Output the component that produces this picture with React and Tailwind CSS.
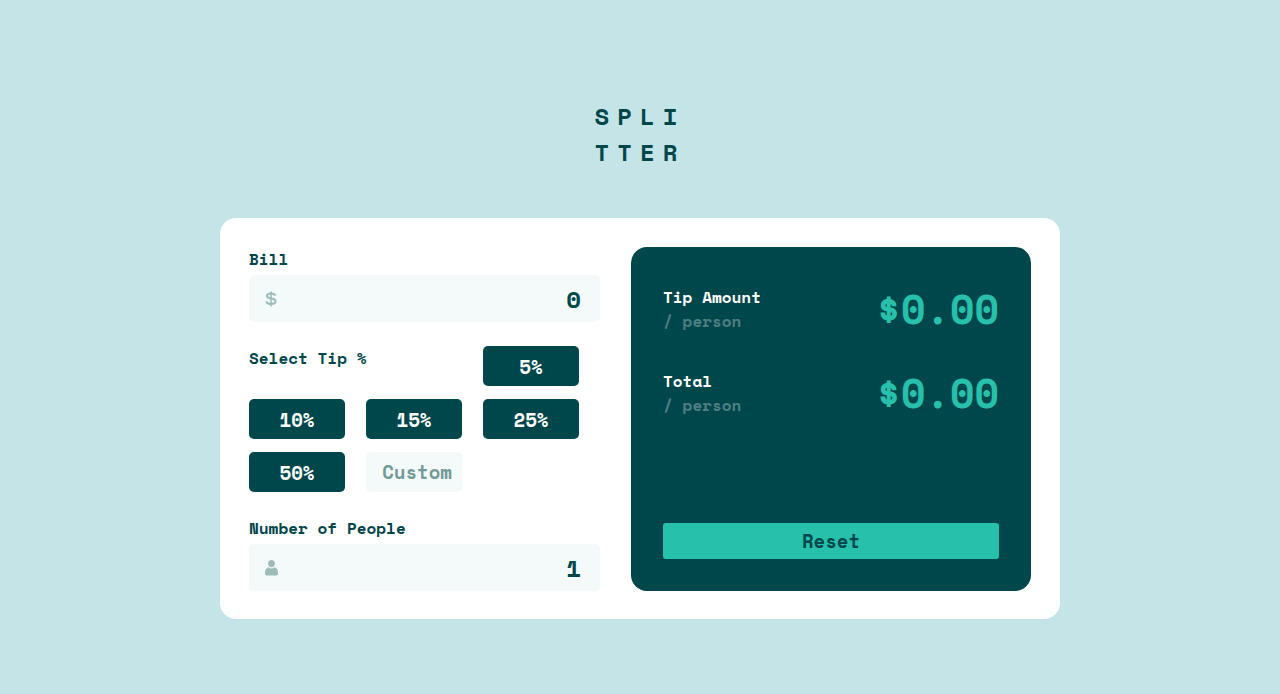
import { useState } from "react";

const TIPS = [5, 10, 15, 25, 50];

function DollarIcon() {
  return (
    <svg width="12" height="17" viewBox="0 0 12 17" fill="none" stroke="#9dbcb9" strokeWidth="2" aria-hidden="true">
      <path d="M10.500 5.600C9.800 4.200 8.200 3.500 6.100 3.500 3.700 3.500 1.900 4.400 1.900 6c0 1.600 1.600 2.100 4.200 2.500 2.700.4 4.500 1 4.500 2.800 0 1.700-1.900 2.700-4.500 2.700-2.400 0-4.300-.9-5-2.500" />
      <path strokeWidth="1.500" d="M6.100 1.500v15" />
    </svg>
  );
}

function PersonIcon() {
  return (
    <svg width="13" height="16" viewBox="0 0 13 16" aria-hidden="true">
      <path
        fill="#9dbcb9"
        d="M9.600 7.300c2 .5 3.400 2.500 3.400 4.900v1.600c0 1.200-.7 1.700-1.700 1.700H1.700C.7 15.500 0 15 0 13.800v-1.600c0-2.400 1.400-4.400 3.400-4.900.8.8 1.900 1.200 3.100 1.200s2.300-.4 3.100-1.200zM6.500 0c1.900 0 3.400 1.500 3.400 3.500S8.400 7.300 6.500 7.300 3.100 5.500 3.100 3.500 4.600 0 6.500 0z"
      />
    </svg>
  );
}

function NumberField({ id, label, icon, value, onChange }) {
  return (
    <div className="flex flex-col gap-1">
      <label htmlFor={id} className="text-base leading-6">
        {label}
      </label>
      <div className="flex h-[47px] items-center rounded-[5px] bg-[#f3faf9] px-4">
        {icon}
        <input
          id={id}
          type="text"
          inputMode="decimal"
          value={value}
          onChange={(e) => onChange(e.target.value)}
          className="h-full min-w-0 flex-1 bg-transparent pr-[3px] text-right text-2xl outline-none"
        />
      </div>
    </div>
  );
}

function ResultRow({ title, amount }) {
  return (
    <div className="flex items-center justify-between">
      <div className="leading-6">
        <p className="text-white">{title}</p>
        <p className="text-[#4f7f83]">/ person</p>
      </div>
      <output className="text-[40px] leading-[60px] text-[#26c0ab]">
        ${amount.toFixed(2)}
      </output>
    </div>
  );
}

export default function App() {
  const [bill, setBill] = useState("0");
  const [people, setPeople] = useState("1");
  const [tip, setTip] = useState(0);
  const [custom, setCustom] = useState("");

  const hasBill = Number(bill) > 0;
  const total = hasBill ? Number(bill) : 0;
  const count = Math.max(Number(people) || 1, 1);
  const rate = (Number(custom) || tip) / 100;
  const tipEach = (total * rate) / count;
  const totalEach = total / count + tipEach;

  const reset = () => {
    setBill("0");
    setPeople("1");
    setTip(0);
    setCustom("");
  };

  return (
    <div className="flex min-h-screen flex-col items-center justify-center bg-[#c5e4e7] pt-[23px] font-['Space_Mono','Liberation_Mono',monospace] font-bold text-[#00474b]">
      <h1 className="mb-12 text-2xl leading-9 tracking-[8px]">
        SPLI
        <br />
        TTER
      </h1>
      <main className="grid w-full max-w-[840px] gap-[31px] rounded-2xl bg-white px-[29px] pt-[29px] pb-7 md:grid-cols-[351fr_400fr]">
        <section className="flex flex-col gap-6">
          <NumberField id="bill" label="Bill" icon={<DollarIcon />} value={bill} onChange={setBill} />
          <div role="group" aria-labelledby="tip-label" className="grid grid-cols-3 gap-y-[13px]">
            <span id="tip-label" className="col-span-2 leading-6">
              Select Tip %
            </span>
            {TIPS.map((t) => (
              <button
                key={t}
                type="button"
                onClick={() => setTip(t)}
                className="h-10 w-24 rounded-[5px] bg-[#00474b] pt-[3px] text-[19px] text-white hover:bg-[#9fe8df] hover:text-[#00474b]"
              >
                {t}%
              </button>
            ))}
            <input
              type="text"
              inputMode="decimal"
              aria-label="Custom tip percentage"
              placeholder="Custom"
              value={custom}
              onChange={(e) => setCustom(e.target.value)}
              className="h-10 w-24 rounded-[5px] bg-[#f3faf9] pr-[10px] text-right text-[19px] outline-none placeholder:text-[#739a99]"
            />
          </div>
          <NumberField id="people" label="Number of People" icon={<PersonIcon />} value={people} onChange={setPeople} />
        </section>
        <section className="flex min-h-[344px] flex-col justify-between rounded-2xl bg-[#00474b] p-8">
          <div className="flex flex-col gap-6">
            <ResultRow title="Tip Amount" amount={tipEach} />
            <ResultRow title="Total" amount={totalEach} />
          </div>
          <button type="button" onClick={reset} className="h-9 rounded-[3px] bg-[#26c0ab] text-[19px]">
            Reset
          </button>
        </section>
      </main>
    </div>
  );
}
